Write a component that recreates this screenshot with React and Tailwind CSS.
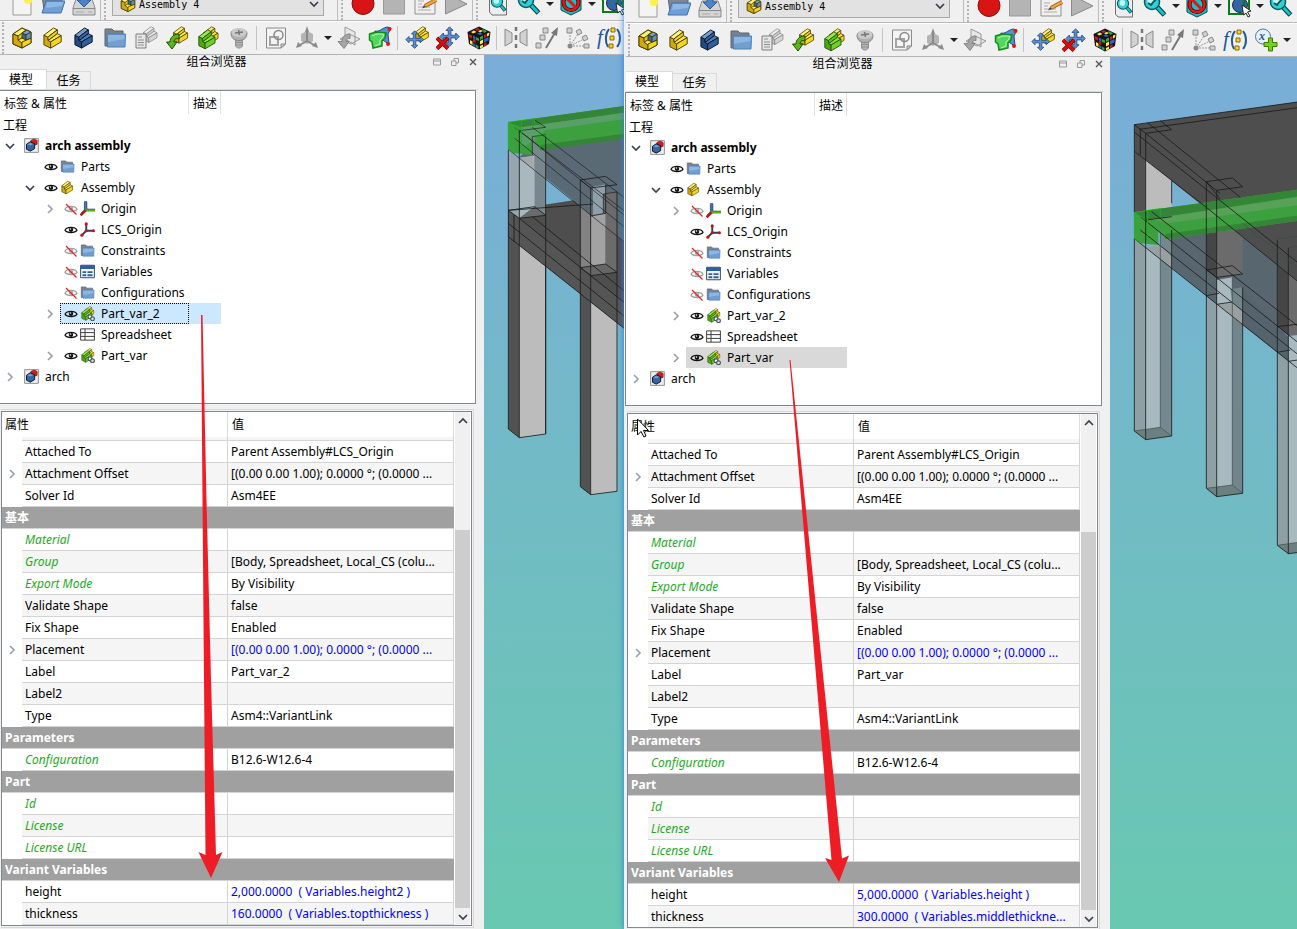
import { useState } from "react";

const YELLOW = { top: "#fcf07a", riser: "#e9cf28", seat: "#ffe94a", front: "#f5d61c", side: "#d0a90c", line: "#4a4000" };
const BLUE = { top: "#729fcf", riser: "#34639f", seat: "#4c7fc0", front: "#2f5f9f", side: "#204a87", line: "#0b1521" };
const GREEN = { top: "#9be84a", riser: "#5fc31c", seat: "#8ae234", front: "#6fd01f", side: "#4fa80e", line: "#245212" };
const GREY = { top: "#eeeeee", riser: "#cfcfcf", seat: "#e8e8e8", front: "#d4d4d4", side: "#c0c0c0", line: "#8a8a8a" };

const LShape = ({ c, transform }) => (
  <g transform={transform} stroke={c.line} strokeWidth="1" strokeLinejoin="round">
    <path fill={c.side} d="M2 8.5 6 10.5 6.5 14 9 15.5V22L2 18.5z" />
    <path fill={c.top} d="M2 8.5 12 1 16 3 6 10.5z" />
    <path fill={c.riser} d="M6 10.5 16 3V7L6.5 14z" />
    <path fill={c.seat} d="M6.5 14 16 7 20 9 9 15.5z" />
    <path fill={c.front} d="M9 15.5 20 9V15.5L9 22z" />
  </g>
);

const Svg = ({ size = "size-6", children }) => (
  <svg viewBox="0 0 24 24" className={`block shrink-0 ${size}`} fill="none" aria-hidden="true">
    {children}
  </svg>
);

const PartIcon = ({ size, c = YELLOW }) => (
  <Svg size={size}>
    <LShape c={c} transform="translate(1 1) scale(.96)" />
  </Svg>
);

const AssemblyIcon = ({ size }) => (
  <Svg size={size}>
    <g stroke="#4a4000" strokeLinejoin="round">
      <path fill="#e9c81c" d="M3 8 12 2 21 6V17L12 22 3 18z" />
      <path fill="#fcf07a" d="M3 8 12 2 16 4 8 10z" />
      <path fill="#d0a90c" d="M3 8 8 10V14L12 16V22L3 18z" />
      <path fill="#ffe94a" d="M8 14 12 12 21 12 12 17z" />
      <path fill="#f5d61c" d="M12 16 21 12V17L12 22z" />
      <path fill="#729fcf" d="M12 7 17 4 21 6 16 9z" />
      <path fill="#3465a4" d="M12 7 16 9V14L12 12z" />
      <path fill="#5a8fcf" d="M16 9 21 6V12L16 14z" />
    </g>
  </Svg>
);

const FolderIcon = ({ size }) => (
  <Svg size={size}>
    <path fill="#7b818a" stroke="#5d646e" d="M2 3H9L11 5H20V20H2z" />
    <path fill="#729fd0" stroke="#4a7fbe" d="M4 8H22.500L22 21H4.500z" />
    <path fill="#8fb6e0" d="M5 9H21.500V13L5 16z" />
  </Svg>
);

const InfoIcon = () => (
  <Svg>
    <LShape c={GREY} transform="translate(8 0) scale(.75)" />
    <path fill="#e6e6e6" stroke="#7f7f7f" d="M2 8H12V22H2z" />
    <path stroke="#8f8f8f" d="M4 11H8M4 14H10M4 16.500H10M4 19H10" />
  </Svg>
);

const ImportIcon = () => (
  <Svg>
    <LShape c={YELLOW} transform="translate(7 0) scale(.78)" />
    <path fill="#58b814" stroke="#1f4d06" strokeLinejoin="round" d="M14 8C8 8 5 12 5 16H1.500L7 23 12 16H9C9 13 11 12 14 13z" />
  </Svg>
);

const VariantIcon = ({ size, link }) => (
  <Svg size={size}>
    <LShape c={YELLOW} transform="translate(6 0) scale(.8)" />
    <LShape c={GREEN} transform="translate(1 3) scale(.9)" />
    {link && (
      <g stroke="#4d5a63" strokeWidth="2">
        <circle cx="16" cy="17" r="3" fill="#fff" />
        <circle cx="20" cy="20.500" r="3" fill="#dde6ea" />
      </g>
    )}
  </Svg>
);

const ScrewIcon = () => (
  <Svg>
    <path fill="#b5b5b5" stroke="#909090" d="M8.500 13H15.500V20L13.500 22H10.500L8.500 20zM8.500 16.500H15.500M8.500 19H15.500" />
    <path fill="#b0b0b0" stroke="#858585" d="M4 7C4 2 20 2 20 7 20 12 17 14.500 12 14.500S4 12 4 7z" />
    <ellipse cx="12" cy="6.500" rx="7.500" ry="4.500" fill="#cacaca" />
    <path stroke="#777" strokeWidth="1.500" d="M8 7 16 6M11.500 4 12.500 9" />
  </Svg>
);

const SketchIcon = () => (
  <Svg>
    <path fill="#f4f4f4" stroke="#8a8a8a" d="M2.500 2H21.500V18L17 22H2.500z" />
    <path stroke="#a5a5a5" strokeWidth="2" d="M6 11H14V19H6z" />
    <circle cx="14.500" cy="9" r="4.500" stroke="#8a8a8a" strokeWidth="1.500" />
    <path fill="#ccc" stroke="#8a8a8a" d="M21.500 18H17V22z" />
  </Svg>
);

const AxesIcon = () => (
  <Svg>
    <path fill="#b4b4b4" d="M6 8 12 5 18 8V15L12 18 6 15z" />
    <path stroke="#8a8a8a" strokeWidth="2" d="M12 4V15M12 15 3 20M12 15 21 20" />
    <path fill="#8a8a8a" d="M12 0 14 6H10zM1 22 3 16 7 20zM23 22 21 16 17 20z" />
  </Svg>
);

const PlaceIcon = () => (
  <Svg>
    <path stroke="#999" fill="#e2e2e2" fillOpacity=".7" d="M8 1 18 6V19L8 13zM3 13 12 8 23 13 14 18z" />
    <path fill="#a6a6a6" stroke="#858585" d="M13 8C7 8 5 12 5 15.500H1L7 22.500 12 15.500H9C9 13 11 12 13 12.500z" />
  </Svg>
);

const BinderIcon = () => (
  <Svg>
    <path fill="#5a8fd0" stroke="#204a87" d="M7 5C12 6 12 3 19 1L23 2 20 8 21 18 13 13 6 9z" />
    <path fill="#52d65c" stroke="#118a1e" strokeWidth="1.500" d="M1.500 8 8 6 18 7 17 12 14 15V20L5 22 4 16 1.500 14z" />
    <path stroke="#b4f2b8" d="M4 10 9 8H15.500L15 11 12 14V18L7 20" />
    <circle cx="21.500" cy="3" r="2" fill="#e01818" />
    <circle cx="20" cy="18" r="2" fill="#e01818" />
  </Svg>
);

const MoveArrows = ({ transform }) => (
  <path
    transform={transform}
    fill="#5a90cf"
    stroke="#204a87"
    strokeLinejoin="round"
    d="M12 1 16 5H13.500V10.500H19V8L23 12 19 16V13.500H13.500V19H16L12 23 8 19H10.500V13.500H5V16L1 12 5 8V10.500H10.500V5H8z"
  />
);

const MovePartIcon = () => (
  <Svg>
    <LShape c={YELLOW} transform="translate(9 0) scale(.72)" />
    <MoveArrows transform="translate(0 4) scale(.8)" />
  </Svg>
);

const DeleteMoveIcon = () => (
  <Svg>
    <MoveArrows transform="translate(3 0) scale(.88)" />
    <path stroke="#5d0000" strokeWidth="4" d="M1 12 12 22.500M12 12 1 22.500" />
    <path stroke="#d80f0f" strokeWidth="2.500" d="M1 12 12 22.500M12 12 1 22.500" />
  </Svg>
);

const CubeIcon = () => (
  <Svg>
    <path fill="#161616" d="M12 .5 23.500 6 22 18 12 23.500 2 18 .5 6z" />
    <path fill="#fce94f" d="M4 6 7 4.500 9.500 6 6 7.500zM11 5 14 4 16 5 13 6.500zM3 14 5.500 15.500V19L3 17.500zM13 15 16 13.500V17L13 18.500zM20 7.500 22.500 6.500 22 9.500 20 10.500zM13 20 16 18.500V21L13 22.500z" />
    <path fill="#d41919" d="M8 3.500 11 2 13 3.500 10 5zM1.500 8 5 9.500V12.500L2 11zM17 9 19.500 8V11L17 12zM6 12.500 8.500 14V17L6 16zM17 17.500 19.500 16V19L17 20.500z" />
    <path fill="#3163c0" d="M10 7.500 13 9 16 8 13 6.500zM6 9.500 8.500 11V14L6 12zM17 13 21.500 11V14.500L17 16.500zM6 17 8.500 18.500V21L6 19.500z" />
    <path fill="#35a835" d="M15 3 18 4 20 5.500 17 7zM9 11 12 12.500V15L9 14zM13 11 16 9.500V12.500L13 14zM9 18.500 11.500 20V22.500L9 21.500z" />
  </Svg>
);

const MirrorIcon = () => (
  <Svg>
    <path fill="#d2d2d2" stroke="#8a8a8a" d="M1 3 8 7V16L1 20zM23 3 16 7V16L23 20z" />
    <path stroke="#777" strokeWidth="2.500" d="M12 1V5M12 9V14M12 18V22" />
  </Svg>
);

const LinearIcon = () => (
  <Svg>
    <path fill="#d2d2d2" stroke="#8a8a8a" d="M1 17H6V22H1zM5 9H10V14H5zM8 2H13V7H8z" />
    <path stroke="#777" strokeWidth="2" d="M11 22 21 5" />
    <path fill="#777" d="M23 1 22 10 16 7z" />
  </Svg>
);

const PolarIcon = () => (
  <Svg>
    <path stroke="#999" strokeDasharray="2 1" d="M4 20V6M4 20 12 8M4 20 18 13M4 20H19" />
    <circle cx="4" cy="20" r="2.500" fill="#888" />
    <path fill="#d2d2d2" stroke="#8a8a8a" d="M1 2H6V7H1zM10 5 14 3 16 7 12 9zM16 11 20 9 22 13 18 15zM18 18H23V22H18z" />
  </Svg>
);

const FormulaIcon = () => (
  <Svg>
    <text x="0" y="18" fill="#24599c" fontFamily="Liberation Serif, serif" fontStyle="italic" fontSize="21">f</text>
    <path stroke="#24599c" strokeWidth="2" d="M12 3C8 8 8 16 11 21M20 3C24 8 24 16 20 21" />
    <path fill="#fad02c" stroke="#8a6d00" d="M14 2H18V6H14zM13 10H17V14H13zM12 18H16V22H12z" />
  </Svg>
);

const VariableIcon = () => (
  <Svg>
    <circle cx="9" cy="8.500" r="7.500" fill="#e6f0fa" stroke="#4c76a8" />
    <text x="5" y="12" fill="#24599c" fontFamily="Liberation Serif, serif" fontStyle="italic" fontWeight="bold" fontSize="12">x</text>
    <path fill="#73d216" stroke="#3a7d06" d="M14.500 10H18.500V14.500H23V18.500H18.500V23H14.500V18.500H10V14.500H14.500z" />
  </Svg>
);

const NewIcon = () => (
  <Svg>
    <path fill="#f4f4f2" stroke="#9a9a98" d="M3 1H21V23H3z" />
    <circle cx="18" cy="8" r="4" fill="#fff04a" />
  </Svg>
);

const OpenIcon = () => (
  <Svg>
    <path fill="#808790" stroke="#5d646e" d="M1 3H21V18H3z" />
    <path fill="#6f9fd6" stroke="#3d72b4" d="M5 9H24L20 21H1z" />
    <path fill="#90b8e4" d="M6 10H22.500L21 14 5 16z" />
  </Svg>
);

const SaveIcon = () => (
  <Svg>
    <path fill="#d4d4d4" stroke="#8a8a8a" d="M4 7H20L23 16V23H1V16z" />
    <path stroke="#8a8a8a" d="M1 16.500H23" />
    <path stroke="#aaa" d="M4 20H12M16 20H20" />
    <path fill="#4d84c8" stroke="#2b5a98" d="M9 1H15V8H19L12 15 5 8H9z" />
  </Svg>
);

const RecordIcon = () => (
  <Svg>
    <circle cx="12" cy="11.500" r="11" fill="#d81414" stroke="#8c0b0b" />
  </Svg>
);

const StopIcon = () => (
  <Svg>
    <path fill="#b4b4b4" stroke="#999" d="M1.500 1H22.500V22H1.500z" />
  </Svg>
);

const MacroIcon = () => (
  <Svg>
    <path fill="#f0f0f0" stroke="#909090" d="M2 1H22V22H2z" />
    <path stroke="#aaa" d="M5 9H11M5 12H9M5 15H17M5 18H18" />
    <path stroke="#a35a12" strokeWidth="4" d="M12 14 23 8" />
    <path stroke="#f2a541" strokeWidth="2.500" d="M12 14 23 8" />
    <path fill="#444" d="M9 16.500 11 13 13 15z" />
  </Svg>
);

const PlayIcon = () => (
  <Svg>
    <path fill="#b4b4b4" stroke="#8a8a8a" d="M1.500 1 23 12 1.500 22z" />
  </Svg>
);

const Lens = ({ cx, cy, r }) => (
  <>
    <path stroke="#07393c" strokeWidth="5" d={`M${cx + r * 0.7} ${cy + r * 0.7} 21.500 21`} />
    <path stroke="#12c4cc" strokeWidth="3" d={`M${cx + r * 0.7} ${cy + r * 0.7} 21 20.500`} />
    <circle cx={cx} cy={cy} r={r} fill="#2fd0d6" stroke="#0b5a5e" strokeWidth="1.500" />
    <circle cx={cx - 1} cy={cy - 1} r={r * 0.5} fill="#c4f4f4" />
  </>
);

const FitAllIcon = () => (
  <Svg>
    <path fill="#ededed" stroke="#6f6f6f" d="M3.500 1H20.500V23H6L3.500 20z" />
    <g transform="translate(4 4) scale(.7)">
      <Lens cx={10} cy={8} r={8} />
    </g>
  </Svg>
);

const ZoomIcon = () => (
  <Svg>
    <Lens cx={9} cy={8} r={7.5} />
    <path stroke="#0b5a5e" strokeWidth="2" d="M5 9 8 11 13 5" />
  </Svg>
);

const DrawStyleIcon = () => (
  <Svg>
    <path fill="#17bfc6" stroke="#0b4a4e" d="M2 5 12 1 22 5V18L12 23 2 18z" />
    <circle cx="12" cy="10.500" r="7.500" stroke="#450000" strokeWidth="4" />
    <circle cx="12" cy="10.500" r="7.500" stroke="#e01818" strokeWidth="2.500" />
    <path stroke="#e01818" strokeWidth="3" d="M7 5.500 17 15.500" />
  </Svg>
);

const BoundingIcon = () => (
  <Svg>
    <circle cx="13" cy="11" r="7.500" fill="#3465a4" stroke="#132c50" />
    <path stroke="#0b7a1a" strokeWidth="2" d="M2 5H17V20H2zM2 5 7 1H22V15L17 20M17 5 22 1" />
    <path fill="#fff" stroke="#222" d="M15 11 24 17 20.500 18 23 22 21 23 19 19 16.500 21z" />
  </Svg>
);

const DocIcon = () => (
  <Svg size="size-[15px]">
    <path fill="#ececec" stroke="#8c8c8c" strokeWidth="1.500" d="M1 1H23V23H1z" />
    <path fill="#e01818" stroke="#7c0d0d" d="M11 4 16 1.500 21 4V10L16 12 11 9z" />
    <path fill="#3465a4" stroke="#0b1521" strokeWidth="1.500" d="M4 10 10 6 17 9V17L10 21 4 18z" />
    <path fill="#729fcf" d="M5 10 10 7.500 15 9.500 10 12z" />
  </Svg>
);

const OriginIcon = () => (
  <Svg size="size-[15px]">
    <path stroke="#3b78c4" strokeWidth="4" d="M9 15V0" />
    <path stroke="#5bb81a" strokeWidth="4" d="M9 15H24" />
    <path stroke="#b81414" strokeWidth="4" d="M9 15 1 23" />
    <path stroke="#222" d="M11 1V13H24M7 1V14L1 20" />
  </Svg>
);

const LcsIcon = () => (
  <Svg size="size-[15px]">
    <path stroke="#26425f" strokeWidth="3" d="M10 14V3M10 14H22M10 14 3 21" />
    <circle cx="10" cy="3" r="2.500" fill="#c41414" />
    <circle cx="21.500" cy="14" r="2.500" fill="#c41414" />
    <circle cx="3" cy="21" r="2.500" fill="#c41414" />
    <circle cx="10" cy="14" r="2.500" fill="#c41414" />
  </Svg>
);

const VariablesIcon = () => (
  <Svg size="size-[15px]">
    <path fill="#f2f5fa" stroke="#26425f" strokeWidth="1.500" d="M1 2H23V22H1z" />
    <path fill="#2f5f9f" d="M1 2H23V8H1z" />
    <path stroke="#2f5f9f" strokeWidth="3" d="M4 13H10M12 13H20M4 18H10M12 18H20" />
  </Svg>
);

const SheetIcon = () => (
  <Svg size="size-[15px]">
    <path fill="#fff" stroke="#333" strokeWidth="1.500" d="M1 3H23V21H1zM1 9H23M1 15H23M8 3V21" />
  </Svg>
);

const EyeIcon = ({ hidden }) => (
  <svg viewBox="0 0 14 12" className="h-3 w-3.5 shrink-0" fill="none" aria-hidden="true">
    <path stroke={hidden ? "#9c9c9c" : "#111"} strokeWidth="1.300" d="M1 6.200C3 2.500 11 2.500 13 6.200 11 9.500 3 9.500 1 6.200z" />
    <circle cx="7" cy="5.800" r="2.200" fill={hidden ? "#aaa" : "#111"} />
    <circle cx="6.500" cy="5" r=".8" fill="#fff" />
    {hidden && <path stroke="#ee2222" strokeWidth="1.200" d="M2 1 12.500 11.500" />}
  </svg>
);

const Chevron = ({ dir, className = "text-gray-500" }) => {
  const paths = { right: "M3 1 7 5 3 9", down: "M1 3 5 7 9 3", up: "M1 7 5 3 9 7" };
  return (
    <svg viewBox="0 0 10 10" className={`size-2.5 ${className}`} fill="none" aria-hidden="true">
      <path stroke="currentColor" strokeWidth="1.700" d={paths[dir]} />
    </svg>
  );
};

const ToolButton = ({ label, children }) => (
  <button aria-label={label} className="flex w-[31px] shrink-0 items-center justify-center">
    {children}
  </button>
);

const MenuArrow = ({ label }) => (
  <button aria-label={label} className="flex w-[11px] shrink-0 items-center justify-center self-center">
    <svg viewBox="0 0 8 4" className="h-1 w-2" aria-hidden="true">
      <path d="M0 0H8L4 4z" fill="#222" />
    </svg>
  </button>
);

const Grip = () => <span className="mr-0.5 w-0 shrink-0 self-stretch border-l-2 border-dotted border-[#b4b4b4]" />;
const Divider = () => <span className="mr-[3px] ml-0.5 h-6 w-px shrink-0 self-center bg-[#c4c4c4]" />;
const Edge = () => <span className="mx-px w-px shrink-0 self-stretch bg-[#bdbdbd]" />;

const FileToolbar = ({ height }) => (
  <div className={`flex items-end overflow-hidden border-b border-[#b9b9b9] ${height}`}>
    <div className="flex h-8 shrink-0 items-center pl-1.5">
      <ToolButton label="New"><NewIcon /></ToolButton>
      <ToolButton label="Open"><OpenIcon /></ToolButton>
      <ToolButton label="Save"><SaveIcon /></ToolButton>
    </div>
    <div className="flex h-8 shrink-0 items-center gap-0.5 pr-1"><Edge /><Grip /></div>
    <label className="relative mb-1 flex h-7 w-[212px] shrink-0 items-end border border-[#a8a8a8] bg-[#e2e2e2]">
      <span className="pointer-events-none absolute bottom-0.5 left-1.5"><AssemblyIcon size="size-[18px]" /></span>
      <select aria-label="Workbench" className="h-5 w-full appearance-none bg-transparent pl-[26px] font-['DejaVu_Sans_Mono',monospace] text-[10px] outline-none">
        <option>Assembly 4</option>
      </select>
      <span className="pointer-events-none absolute right-1 bottom-1.5"><Chevron dir="down" className="text-gray-700" /></span>
    </label>
    <div className="ml-3 flex h-8 shrink-0 items-center gap-0.5"><Edge /><Grip /></div>
    <div className="flex h-8 shrink-0 items-center pl-0.5">
      <ToolButton label="Record macro"><RecordIcon /></ToolButton>
      <ToolButton label="Stop macro"><StopIcon /></ToolButton>
      <ToolButton label="Macros"><MacroIcon /></ToolButton>
      <ToolButton label="Run macro"><PlayIcon /></ToolButton>
    </div>
    <div className="flex h-8 shrink-0 items-center gap-0.5"><Edge /><Grip /></div>
    <div className="flex h-8 shrink-0 items-center pl-0.5">
      <ToolButton label="Fit all"><FitAllIcon /></ToolButton>
      <ToolButton label="Zoom"><ZoomIcon /></ToolButton>
      <MenuArrow label="Zoom options" />
      <ToolButton label="Draw style"><DrawStyleIcon /></ToolButton>
      <MenuArrow label="Draw style options" />
      <ToolButton label="Bounding box"><BoundingIcon /></ToolButton>
      <MenuArrow label="Bounding box options" />
      <ToolButton label="Zoom in"><ZoomIcon /></ToolButton>
    </div>
  </div>
);

const AssemblyToolbar = () => (
  <div className="flex h-[34px] items-center overflow-hidden border-t border-b border-t-white border-b-[#b4b4b4] pl-0.5">
    <Grip />
    <ToolButton label="New assembly"><AssemblyIcon /></ToolButton>
    <ToolButton label="New part"><PartIcon /></ToolButton>
    <ToolButton label="New body"><PartIcon c={BLUE} /></ToolButton>
    <ToolButton label="New group"><FolderIcon /></ToolButton>
    <ToolButton label="Part information"><InfoIcon /></ToolButton>
    <ToolButton label="Insert part"><ImportIcon /></ToolButton>
    <ToolButton label="Insert variant"><VariantIcon /></ToolButton>
    <ToolButton label="Insert screw"><ScrewIcon /></ToolButton>
    <Divider />
    <ToolButton label="New sketch"><SketchIcon /></ToolButton>
    <ToolButton label="New coordinate system"><AxesIcon /></ToolButton>
    <MenuArrow label="Datum options" />
    <ToolButton label="Place sketch"><PlaceIcon /></ToolButton>
    <ToolButton label="Shape binder"><BinderIcon /></ToolButton>
    <Divider />
    <ToolButton label="Edit placement"><MovePartIcon /></ToolButton>
    <ToolButton label="Remove placement"><DeleteMoveIcon /></ToolButton>
    <ToolButton label="Solve"><CubeIcon /></ToolButton>
    <Divider />
    <ToolButton label="Mirror"><MirrorIcon /></ToolButton>
    <ToolButton label="Linear array"><LinearIcon /></ToolButton>
    <ToolButton label="Polar array"><PolarIcon /></ToolButton>
    <ToolButton label="Formula"><FormulaIcon /></ToolButton>
    <ToolButton label="Add variable"><VariableIcon /></ToolButton>
    <MenuArrow label="Variable options" />
  </div>
);

const tree = [
  { level: 0, name: "arch assembly", icon: <DocIcon />, chevron: "down", bold: true },
  { level: 1, name: "Parts", icon: <FolderIcon size="size-[15px]" />, eye: "on" },
  { level: 1, name: "Assembly", icon: <PartIcon size="size-[15px]" />, eye: "on", chevron: "down" },
  { level: 2, name: "Origin", icon: <OriginIcon />, eye: "off", chevron: "right" },
  { level: 2, name: "LCS_Origin", icon: <LcsIcon />, eye: "on" },
  { level: 2, name: "Constraints", icon: <FolderIcon size="size-[15px]" />, eye: "off" },
  { level: 2, name: "Variables", icon: <VariablesIcon />, eye: "off" },
  { level: 2, name: "Configurations", icon: <FolderIcon size="size-[15px]" />, eye: "off" },
  { level: 2, name: "Part_var_2", icon: <VariantIcon size="size-[15px]" link />, eye: "on", chevron: "right" },
  { level: 2, name: "Spreadsheet", icon: <SheetIcon />, eye: "on" },
  { level: 2, name: "Part_var", icon: <VariantIcon size="size-[15px]" link />, eye: "on", chevron: "right" },
  { level: 0, name: "arch", icon: <DocIcon />, chevron: "right" },
];

const indent = ["pl-0", "pl-5", "pl-10"];

const ModelTree = ({ selected, focused, onSelect }) => (
  <div className="-ml-px w-[477px] border border-[#828790] bg-white pb-4">
    <div className="flex h-[23px] items-center">
      <span className="flex h-full w-[189px] items-center border-r border-[#e0e0e0] pt-0.5 pl-1">标签 &amp; 属性</span>
      <span className="flex h-full w-8 items-center border-r border-[#e0e0e0] pt-0.5 pl-1">描述</span>
    </div>
    <div className="flex h-[21px] items-center pt-0.5 pl-[3px]">工程</div>
    <ul>
      {tree.map((item) => {
        const active = item.name === selected;
        const bg = active ? (focused ? "bg-[#cce8ff]" : "bg-[#d9d9d9]") : "";
        return (
          <li key={item.name} onClick={() => onSelect(item.name)} className={`flex h-[21px] w-[221px] ${indent[item.level]}`}>
            <span className="flex w-5 items-center justify-center">
              {item.chevron && (
                <button aria-label={`Toggle ${item.name}`}>
                  <Chevron dir={item.chevron} className={item.chevron === "down" ? "text-gray-700" : "text-gray-400"} />
                </button>
              )}
            </span>
            <div className={`flex-1 ${bg}`}>
              <div className={`mr-8 flex h-full items-center border border-dotted pl-[3px] ${active && focused ? "border-black" : "border-transparent"}`}>
                {item.eye && (
                  <span className="mr-0.5">
                    <EyeIcon hidden={item.eye === "off"} />
                  </span>
                )}
                {item.icon}
                <span className={`ml-1.5 whitespace-nowrap ${item.bold ? "font-bold" : ""}`}>{item.name}</span>
              </div>
            </div>
          </li>
        );
      })}
    </ul>
  </div>
);

const buildRows = ({ label, height, thickness }) => [
  { name: "Attached To", value: "Parent Assembly#LCS_Origin" },
  { name: "Attachment Offset", value: "[(0.00 0.00 1.00); 0.0000 °; (0.0000 ...", expand: true, alt: true },
  { name: "Solver Id", value: "Asm4EE" },
  { group: "基本" },
  { name: "Material", value: "", green: true },
  { name: "Group", value: "[Body, Spreadsheet, Local_CS (colu...", green: true, alt: true },
  { name: "Export Mode", value: "By Visibility", green: true },
  { name: "Validate Shape", value: "false", alt: true },
  { name: "Fix Shape", value: "Enabled" },
  { name: "Placement", value: "[(0.00 0.00 1.00); 0.0000 °; (0.0000 ...", expand: true, alt: true, blue: true },
  { name: "Label", value: label },
  { name: "Label2", value: "", alt: true },
  { name: "Type", value: "Asm4::VariantLink" },
  { group: "Parameters" },
  { name: "Configuration", value: "B12.6-W12.6-4", green: true },
  { group: "Part" },
  { name: "Id", value: "", green: true },
  { name: "License", value: "", green: true, alt: true },
  { name: "License URL", value: "", green: true },
  { group: "Variant Variables" },
  { name: "height", value: height, blue: true },
  { name: "thickness", value: thickness, blue: true, alt: true },
];

const PropertyEditor = ({ values, frame, clip }) => (
  <div className={`ml-px mt-[5px] flex min-h-0 w-[473px] flex-1 border-t border-r border-[#d9d9d9] pt-px pr-px ${frame}`}>
    <div className="flex min-w-0 flex-1 overflow-hidden border border-[#828790] bg-white">
      <div className="min-w-0 flex-1">
        <div className="flex h-[25px] items-center">
          <span className="w-[225px] pl-[3px]">属性</span>
          <span className="flex h-full flex-1 items-center border-x border-[#dcdcdc] pl-1">值</span>
        </div>
        {/* bottom edge of the row scrolled under the header */}
        <div className={`flex ${clip}`}>
          <span className="ml-5 w-[206px] border-r border-b border-[#d4d4d4] bg-[#f5f5f5]" />
          <span className="flex-1 border-r border-b border-[#d4d4d4] bg-[#f5f5f5]" />
        </div>
        <table className="w-full table-fixed border-separate border-spacing-0">
          <colgroup>
            <col className="w-5" />
            <col className="w-[206px]" />
            <col />
          </colgroup>
          <tbody>
            {buildRows(values).map((row) =>
              row.group ? (
                <tr key={row.group} className="h-[22px]">
                  <th colSpan={3} className="border-b border-[#d4d4d4] bg-[#a0a0a0] p-0 pt-px pl-[3px] text-left leading-5 font-bold text-white">
                    {row.group}
                  </th>
                </tr>
              ) : (
                <tr key={row.name} className="h-[22px]">
                  <td className="p-0">
                    {row.expand && (
                      <button aria-label={`Expand ${row.name}`} className="mx-auto block">
                        <Chevron dir="right" className="text-gray-400" />
                      </button>
                    )}
                  </td>
                  <td className={`border-r border-b border-[#d4d4d4] p-0 pt-px pl-[3px] leading-5 ${row.alt ? "bg-[#f5f5f5]" : ""} ${row.green ? "text-[#1eaa1e] italic" : ""}`}>
                    {row.name}
                  </td>
                  <td className={`overflow-hidden border-r border-b border-[#d4d4d4] p-0 pt-px pl-[3px] leading-5 whitespace-pre ${row.alt ? "bg-[#f5f5f5]" : ""} ${row.blue ? "text-[#0000ff]" : ""}`}>
                    {row.value}
                  </td>
                </tr>
              )
            )}
          </tbody>
        </table>
      </div>
      <div className="mx-px flex w-[15px] flex-col bg-[#f0f0f0]">
        <button aria-label="Scroll up" className="flex h-[17px] items-center justify-center">
          <Chevron dir="up" className="text-gray-700" />
        </button>
        <div className="flex flex-1 flex-col justify-end">
          <div className="h-[79%] bg-[#cdcdcd]" />
        </div>
        <button aria-label="Scroll down" className="flex h-[17px] items-center justify-center">
          <Chevron dir="down" className="text-gray-700" />
        </button>
      </div>
    </div>
  </div>
);

const Dock = ({ selected: initial, focused, values, frame, clip }) => {
  const [selected, setSelected] = useState(initial);
  const [tab, setTab] = useState("model");

  return (
    <div className="flex min-h-0 w-[484px] shrink-0 flex-col">
      <div className="flex h-[14px] items-center pr-[7px]">
        <span className="flex-1 text-center leading-[14px]">组合浏览器</span>
        <div className="flex w-11 items-center justify-between">
          <button aria-label="Minimize">
            <svg viewBox="0 0 8 8" className="size-2" fill="none"><path stroke="#999" d="M.500 1H7.500V7H.500zM.500 3H7.500" /></svg>
          </button>
          <button aria-label="Float">
            <svg viewBox="0 0 8 8" className="size-2" fill="none"><path stroke="#999" d="M.500 3H5V7.500H.500zM3 3V.500H7.500V5H5" /></svg>
          </button>
          <button aria-label="Close">
            <svg viewBox="0 0 8 8" className="size-2" fill="none"><path stroke="#555" strokeWidth="1.400" d="M1 1 7 7M7 1 1 7" /></svg>
          </button>
        </div>
      </div>
      <div className="flex h-[21px] w-[478px] items-end border-b border-[#d9d9d9]">
        <button onClick={() => setTab("model")} className={`h-5 w-[47px] border-t border-r border-[#d9d9d9] pr-1 ${tab === "model" ? "bg-white" : ""}`}>模型</button>
        <button onClick={() => setTab("task")} className={`h-[18px] w-11 border-t border-r border-[#d9d9d9] leading-4 ${tab === "task" ? "bg-white" : ""}`}>任务</button>
      </div>
      <ModelTree selected={selected} focused={focused} onSelect={setSelected} />
      <PropertyEditor values={values} frame={frame} clip={clip} />
    </div>
  );
};

const LowSlabScene = () => (
  <svg viewBox="18 -105 600 2622" className="h-[874px] w-[200px] shrink-0" strokeLinejoin="round" aria-hidden="true">
    <g fill="#525252">
      <path d="M91 361 345 322 438 308V715L91 440z" fill="#4e4e4e" />
      <path d="M91 361V1017L124 1043V385z" />
      <path d="M307 560V1190L338 1214V560z" />
    </g>
    <g fill="#bcbcbc">
      <path d="M124 467 203 528V1032L124 1043z" />
      <path d="M338 637 417 700V1204L338 1214z" />
    </g>
    <path d="M91 361 124 385 438 640V715L91 440z" fill="#555" />
    <path d="M124 200 203 140 438 148V455L307 348z" fill="#5a6a75" />
    <path d="M91 180 124 205V385L91 361z" fill="#95a6b2" />
    <path d="M124 203 170 197V350L124 385z" fill="#a9b7bf" />
    <path d="M163 140 203 135V376L170 350V197H163z" fill="#78868e" />
    <path d="M124 205 163 197 170 240 124 205z" fill="#a5a9ab" />
    <path d="M124 385 170 350 203 376z" fill="#676c6f" />
    <path d="M307 348 338 376V557L307 533z" fill="#828282" />
    <path d="M338 376 383 369V522L338 557z" fill="#a2a2a2" />
    <path d="M345 290 383 283V310L376 370 345 375z" fill="#8fa0aa" />
    <path d="M376 312 417 305V547L383 522V369L376 370z" fill="#6b6b6b" />
    <path d="M307 533 383 522 417 547 338 557z" fill="#666" />
    <path d="M91 97 438 48V145L186 180 163 140 163 195 110 190 91 178z" fill="#3da03f" />
    <path d="M91 97 438 48V68L130 112z" fill="#358538" />
    <path d="M130 112 438 68V88L203 120 140 170 124 150z" fill="#58a068" />
    <path d="M186 165 438 131V147L186 181z" fill="#358538" />
    <g stroke="#1c1c1c" strokeWidth="2.500" fill="none">
      <path d="M124 122V1043M91 180V1017L124 1043 203 1032V140M203 528V1032M307 270V1190L338 1214 417 1204V305M338 295V1214" />
      <path d="M91 361 170 350 203 376 124 385zM91 361 345 342M91 400 438 678M91 440 438 715M124 385 438 637M163 380 438 602M108 375V455" />
      <path d="M307 533 383 522 417 547 338 557zM307 270 383 259 417 284 338 294zM338 378 383 370V283" />
      <path d="M110 112 438 362M124 122 438 375M110 145 438 410M91 178 438 455M163 112 438 322M124 122 203 112 170 90M163 195V140L203 134M376 370V312L417 306" strokeWidth="2" />
    </g>
    <g stroke="#14b814" strokeWidth="2.500" fill="none">
      <path d="M91 97V178L110 190M91 97 170 86M130 91V175M91 97 124 122M91 120 110 135M170 86V110M186 120V180" />
    </g>
  </svg>
);

const HighSlabScene = () => (
  <svg viewBox="15 -99 600 2616" className="h-[872px] w-[200px] shrink-0" strokeLinejoin="round" aria-hidden="true">
    <path d="M88 104 600 33V590L576 573 88 184z" fill="#4e4e4e" />
    <path d="M88 184V370L122 365V210z" fill="#525252" />
    <path d="M122 210 200 272V355L122 365z" fill="#bcbcbc" />
    <path d="M200 430 304 415 413 440 517 525V785L304 617 200 533z" fill="#58676f" />
    <path d="M304 350 335 376V560L304 540z" fill="#464646" />
    <path d="M335 425 385 420 413 440V552L335 562z" fill="#6b6b6b" />
    <path d="M517 525 550 552V737L517 710z" fill="#464646" />
    <path d="M550 552 600 592V700L576 735 550 737z" fill="#6b6b6b" />
    <path d="M88 445 122 472V1049L88 1023z" fill="#8fa0a5" />
    <path d="M122 472 166 465V1012L122 1049z" fill="#a8babf" />
    <path d="M166 430 200 422V1038L166 1012z" fill="#75888f" />
    <path d="M304 617 335 643V1220L304 1195z" fill="#8fa0a5" />
    <path d="M335 570 382 562V1185L335 1220z" fill="#a8babf" />
    <path d="M376 598 413 592V1210L382 1185V640z" fill="#72858b" />
    <path d="M517 787 550 814V1391L517 1366z" fill="#8fa0a5" />
    <path d="M550 740 600 733V1385L550 1391z" fill="#a8babf" />
    <path d="M88 1023 166 1012 200 1038 122 1049zM304 1195 382 1185 413 1210 335 1220zM517 1366 595 1355 600 1385 550 1391z" fill="#6c8082" />
    <path d="M122 472 166 465 200 500V533zM335 643 382 637 413 665V705z" fill="#9aa0a2" />
    <path d="M200 445 304 540 335 562V643L200 533z" fill="#58676f" />
    <path d="M413 600 550 740V814L413 705z" fill="#55646c" />
    <path d="M88 367 600 296V390L182 448 160 425 160 465 106 460 88 446z" fill="#3da03f" />
    <path d="M88 367 600 296V316L122 390z" fill="#358538" />
    <path d="M140 386 600 318V342L190 400z" fill="#58a158" />
    <path d="M182 432 600 374V390L182 448z" fill="#358538" />
    <g stroke="#1c1c1c" strokeWidth="2.500" fill="none">
      <path d="M88 104 600 33M104 118 600 50M88 104V367M88 446V1023L122 1049 200 1038V420M200 272V340M122 130V1049M106 115V195M88 126 600 535M88 184 304 352M304 275V1195L335 1220 413 1210V592M335 301V1220M517 450V1366L550 1391 600 1385M550 473V1391" />
      <path d="M128 98 406 322M122 130 345 310M165 92 200 119 122 130 88 104M304 275 382 264 413 290 335 301M304 275 345 326M304 352 517 525 600 592" />
      <path d="M106 380 576 755M88 446 600 852M106 420 600 810M140 365 600 725M200 380 122 390M304 540 382 527 413 552 335 562zM304 617 342 610M335 643 382 636M517 710 600 700M517 787 556 780M550 814 600 807" />
    </g>
    <g stroke="#3d4a4c" strokeWidth="2" fill="none">
      <path d="M88 1023 166 1012 200 1038M166 430V1012M304 1195 382 1185 413 1210M382 562V1185M517 1366 595 1355M413 400 600 550M517 447 600 436M550 473 600 466" />
    </g>
    <path d="M88 367V446L106 460M88 367 166 356M88 367 122 390M128 362V440M88 407 106 420M166 356V380" stroke="#14b814" strokeWidth="2.500" fill="none" />
  </svg>
);

const AppWindow = ({ className, barHeight, scene, ...dock }) => (
  <section className={`flex min-w-0 flex-col overflow-hidden bg-[#f0f0f0] ${className}`}>
    <FileToolbar height={barHeight} />
    <AssemblyToolbar />
    <div className="flex min-h-0 flex-1">
      <Dock {...dock} />
      <div className="flex min-w-0 flex-1 overflow-hidden bg-linear-to-b from-[#7aadd8] to-[#68c8b0]">{scene}</div>
    </div>
  </section>
);

export default function App() {
  return (
    <main className="relative grid h-screen grid-cols-[624fr_673fr] grid-rows-1 overflow-hidden font-['Noto_Sans','Noto_Sans_CJK_SC',sans-serif] text-xs text-black">
      <AppWindow
        className=""
        barHeight="h-[21px]"
        scene={<LowSlabScene />}
        selected="Part_var_2"
        focused
        frame="mb-px border-b pb-px"
        clip="h-1"
        values={{
          label: "Part_var_2",
          height: "2,000.0000  ( Variables.height2 )",
          thickness: "160.0000  ( Variables.topthickness )",
        }}
      />
      <AppWindow
        className="z-10 pl-0.5 shadow-[0_0_6px_#2b7fd6]"
        barHeight="h-[23px]"
        scene={<HighSlabScene />}
        selected="Part_var"
        frame="pb-px"
        clip="h-[5px]"
        values={{
          label: "Part_var",
          height: "5,000.0000  ( Variables.height )",
          thickness: "300.0000  ( Variables.middlethickne...",
        }}
      />
      <svg viewBox="0 0 1297 929" className="pointer-events-none absolute top-0 left-0 z-20 h-[929px] w-[1297px]" aria-hidden="true">
        <g fill="#ee1c25">
          <path d="M201 315H202.500L206.500 500 211 680 216 855 222.500 852 211 878 198.500 852 205.500 855 204 680 202.500 500z" />
          <path d="M789.500 360H790.500L842 858.500 849 855.500 839 882 825 858 831.500 860z" />
        </g>
        <path d="M637.500 419V435L641 431.500 644 437 646 436 643.500 430.500H648.500z" fill="#fff" stroke="#000" />
      </svg>
    </main>
  );
}
